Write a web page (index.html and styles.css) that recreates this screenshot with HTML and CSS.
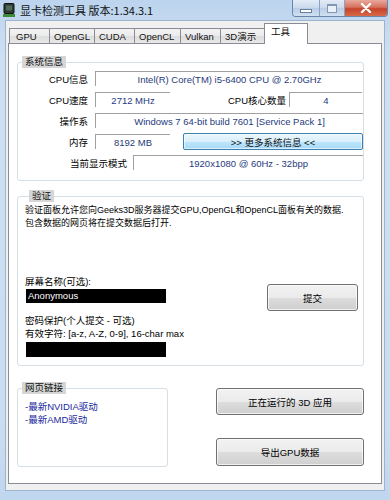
FILE: index.html
```html
<!DOCTYPE html>
<html lang="zh-CN">
<head>
  <meta charset="UTF-8">
  <meta name="viewport" content="width=device-width, initial-scale=1.0">
  <title>显卡检测工具</title>
  <link rel="stylesheet" href="styles.css">
</head>
<body>
  <div class="window">
    <div class="titlebar">
      <svg class="app-icon" width="12" height="14" viewBox="0 0 12 14">
        <rect x="1" y="0.5" width="10" height="10" rx="1" fill="#2b3a33" stroke="#111" stroke-width="1"/>
        <rect x="3" y="2.5" width="6" height="5" fill="#4d6a5a"/>
        <rect x="0" y="11" width="12" height="3" fill="#3c8a3a"/>
      </svg>
      <span class="title">显卡检测工具 版本:1.34.3.1</span>
      <div class="caption-buttons">
        <span class="cap cap-min"><i></i></span>
        <span class="cap cap-max"><i></i></span>
        <span class="cap cap-close">
          <svg width="14" height="10" viewBox="0 0 14 10"><path d="M3 1 L11 9 M11 1 L3 9" stroke="#fff" stroke-width="2.4" stroke-linecap="round"/></svg>
        </span>
      </div>
    </div>

    <div class="client">
      <ul class="tabs">
        <li class="t-gpu">GPU</li>
        <li class="t-gl">OpenGL</li>
        <li class="t-cuda">CUDA</li>
        <li class="t-cl">OpenCL</li>
        <li class="t-vk">Vulkan</li>
        <li class="t-3d">3D演示</li>
        <li class="t-tools active">工具</li>
      </ul>

      <div class="panel">
        <fieldset class="group sysinfo">
          <legend>系统信息</legend>
          <div class="row">
            <label class="lbl">CPU信息</label>
            <div class="field grow">Intel(R) Core(TM) i5-6400 CPU @ 2.70GHz</div>
          </div>
          <div class="row">
            <label class="lbl">CPU速度</label>
            <div class="field short">2712 MHz</div>
            <label class="lbl-cores">CPU核心数量</label>
            <div class="field cores">4</div>
          </div>
          <div class="row">
            <label class="lbl">操作系</label>
            <div class="field grow">Windows 7 64-bit build 7601 [Service Pack 1]</div>
          </div>
          <div class="row">
            <label class="lbl">内存</label>
            <div class="field short">8192 MB</div>
            <button class="more-btn">&gt;&gt; 更多系统信息 &lt;&lt;</button>
          </div>
          <div class="row">
            <label class="lbl lbl-wide">当前显示模式</label>
            <div class="field grow">1920x1080 @ 60Hz - 32bpp</div>
          </div>
        </fieldset>

        <fieldset class="group verify">
          <legend>验证</legend>
          <p class="verify-text">验证面板允许您向Geeks3D服务器提交GPU,OpenGL和OpenCL面板有关的数据.<br>包含数据的网页将在提交数据后打开.</p>
          <div class="verify-form">
            <div class="verify-inputs">
              <div class="line">屏幕名称(可选):</div>
              <div class="black-input">Anonymous</div>
              <div class="line pw-label">密码保护(个人提交 - 可选)<br>有效字符: [a-z, A-Z, 0-9], 16-char max</div>
              <div class="black-input pw"></div>
            </div>
            <button class="win-btn submit-btn">提交</button>
          </div>
        </fieldset>

        <div class="bottom-row">
          <fieldset class="group links">
            <legend>网页链接</legend>
            <div class="link-list">
              <a class="link">-最新NVIDIA驱动</a>
              <a class="link">-最新AMD驱动</a>
            </div>
          </fieldset>
          <div class="action-buttons">
            <button class="win-btn big-btn">正在运行的 3D 应用</button>
            <button class="win-btn big-btn tall">导出GPU数据</button>
          </div>
        </div>
      </div>
    </div>
  </div>
</body>
</html>
```

FILE: styles.css
```css
body {
  margin: 0;
  font-family: "Liberation Sans", "Noto Sans CJK SC", sans-serif;
  font-size: 9.5px;
  color: #000;
}
.window {
  width: 390px;
  height: 500px;
  box-sizing: border-box;
  padding: 0 5px 9px;
  display: flex;
  flex-direction: column;
  background: linear-gradient(#bcd4ee, #cfe0f3 60px, #c9dcf1 440px, #bfd6ef);
}

/* title bar */
.titlebar {
  height: 20px;
  display: flex;
  align-items: flex-start;
}
.app-icon {
  margin: 3px 0 0 -2px;
}
.title {
  margin: 3px 0 0 5px;
  font-family: "Noto Sans CJK SC", sans-serif;
  font-size: 11px;
  line-height: 14px;
  color: #111;
}
.caption-buttons {
  margin-left: auto;
  margin-right: -3px;
  display: flex;
  height: 16px;
  border: 1px solid #6a84a6;
  border-top: none;
  border-radius: 0 0 4px 4px;
  overflow: hidden;
}
.cap {
  display: flex;
  align-items: center;
  justify-content: center;
  height: 16px;
  background: linear-gradient(#e3ecf7, #c9d9ec 50%, #b8cde6 51%, #d0e0f2);
  border-right: 1px solid #8aa2c2;
}
.cap-min { width: 26px; }
.cap-max { width: 24px; }
.cap-min i {
  width: 10px;
  height: 2px;
  margin-top: 5px;
  background: #fff;
  border: 1px solid #6a7f9c;
}
.cap-max i {
  width: 8px;
  height: 6px;
  border: 1px solid #8397b2;
  border-top-width: 2px;
  background: #e9f0f8;
}
.cap-close {
  width: 42px;
  border-right: none;
  background: linear-gradient(#e9a99c, #d7715d 45%, #c5422a 55%, #d86a48);
}

/* client area */
.client {
  flex: 1;
  background: #f0f0f0;
  border: 1px solid #9eb3cc;
  display: flex;
  flex-direction: column;
}
.tabs {
  list-style: none;
  margin: 0;
  padding: 3px 0 0 3px;
  height: 19px;
  display: flex;
  align-items: flex-end;
}
.tabs li {
  height: 15px;
  line-height: 15px;
  box-sizing: border-box;
  padding-left: 4px;
  margin-right: -1px;
  border: 1px solid #898c95;
  border-bottom: none;
  background: linear-gradient(#f3f3f3, #ebebeb 50%, #dddddd 51%, #e8e8e8);
  color: #111;
  white-space: nowrap;
}
.tabs .t-gpu { width: 41px; padding-left: 6px; }
.tabs .t-gl { width: 46px; }
.tabs .t-cuda { width: 41px; }
.tabs .t-cl { width: 47px; }
.tabs .t-vk { width: 41px; }
.tabs .t-3d { width: 45px; }
.tabs li.active {
  position: relative;
  z-index: 1;
  width: 44px;
  height: 21px;
  margin-bottom: -1px;
  padding: 0 0 5px 6px;
  line-height: 15px;
  background: #fff;
}
.panel {
  height: 441px;
  box-sizing: border-box;
  margin: 0 2px;
  padding: 0 17px 0 8px;
  background: #fff;
  border: 1px solid #898c95;
}

/* group boxes */
.group {
  margin: 0;
  padding: 0;
  min-inline-size: 0;
  border: 1px solid #d5dfe5;
  border-radius: 3px;
}
.group legend {
  margin-left: 4px;
  padding: 0 3px;
  line-height: 12px;
  background: #d6d6d6;
  color: #111;
}
.sysinfo {
  margin-top: 12px;
  padding: 3px 0 10px;
}
.row {
  display: flex;
  align-items: center;
  height: 15px;
  margin-bottom: 6px;
}
.row:last-child {
  margin-bottom: 0;
}
.lbl {
  width: 70px;
  margin-right: 7px;
  text-align: right;
}
.lbl-wide {
  width: 109px;
  margin-right: 6px;
}
.field {
  height: 15px;
  line-height: 15px;
  box-sizing: border-box;
  border-top: 1px solid #a0a0a0;
  border-left: 1px solid #a0a0a0;
  text-align: center;
  color: #1f3a7c;
  white-space: nowrap;
}
.field.grow {
  flex: 1;
}
.field.short {
  width: 75px;
}
.lbl-cores {
  flex: 1;
  margin-right: 3px;
  text-align: right;
}
.field.cores {
  width: 73px;
  margin-right: 1px;
}
.more-btn {
  flex: 1;
  height: 17px;
  margin-left: 13px;
  padding: 0;
  font: inherit;
  color: #111;
  border: 1px solid #3c7fb1;
  border-radius: 2px;
  background: linear-gradient(#eaf6fd, #d9f0fc 50%, #bee6fd 51%, #a7d9f5);
  box-shadow: inset 0 0 0 1px rgba(255, 255, 255, 0.6);
}

.verify {
  margin-top: 9px;
  padding: 0 5px 8px 7px;
}
.verify-text {
  margin: 0;
  padding-top: 2px;
  line-height: 13px;
  font-size: 9px;
  white-space: nowrap;
}
.verify-form {
  display: flex;
  margin-top: 45px;
}
.line {
  line-height: 13px;
}
.black-input {
  width: 140px;
  height: 14px;
  line-height: 14px;
  margin: 1px 0 0 1px;
  padding-left: 2px;
  box-sizing: border-box;
  background: #000;
  color: #fff;
}
.pw-label {
  margin-top: 11px;
}
.black-input.pw {
  height: 15px;
  margin-top: 2px;
}
.win-btn {
  padding: 0;
  font: inherit;
  color: #000;
  border: 1px solid #707070;
  border-radius: 3px;
  background: linear-gradient(#f2f2f2, #ebebeb 50%, #dddddd 51%, #cfcfcf);
  box-shadow: inset 0 0 0 1px rgba(255, 255, 255, 0.7);
}
.submit-btn {
  width: 91px;
  height: 27px;
  margin: 9px 0 0 auto;
}

.bottom-row {
  display: flex;
  margin-top: 16px;
}
.links {
  width: 153px;
  box-sizing: border-box;
}
.link-list {
  height: 72px;
  box-sizing: border-box;
  padding: 6px 0 0 7px;
  display: flex;
  flex-direction: column;
}
.link {
  line-height: 13px;
  color: #1a2a9e;
}
.action-buttons {
  display: flex;
  flex-direction: column;
  gap: 23px;
  margin-left: 48px;
  padding-top: 6px;
}
.big-btn {
  width: 148px;
  height: 27px;
}
.big-btn.tall {
  height: 28px;
}
```
